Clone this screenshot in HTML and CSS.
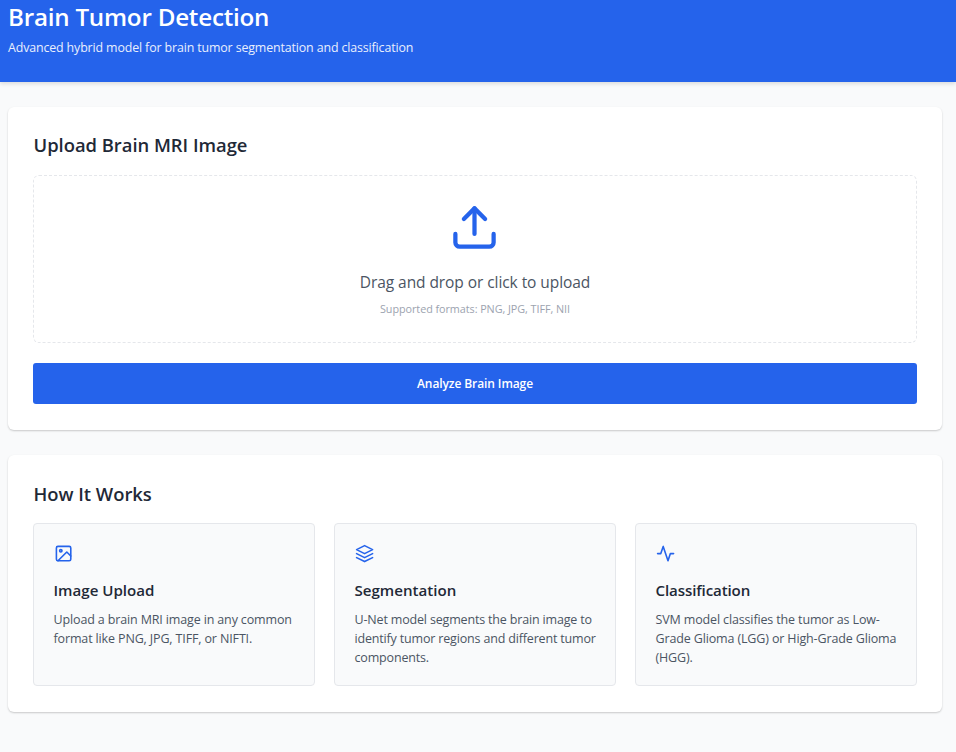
FILE: index.html
```
<!DOCTYPE html>
<html lang="en">
<head>
<meta charset="utf-8">
<title>Brain Tumor Detection</title>
<link rel="stylesheet" href="styles.css">
</head>
<body>
<header class="header">
  <h1 class="title">Brain Tumor Detection</h1>
  <p class="subtitle">Advanced hybrid model for brain tumor segmentation and classification</p>
</header>
<main class="main">
  <section class="card">
    <h2 class="heading upload-heading">Upload Brain MRI Image</h2>
    <div class="dropzone">
      <svg class="upload-icon" viewBox="0 0 24 24"><path d="M21 15v4a2 2 0 0 1-2 2H5a2 2 0 0 1-2-2v-4"/><path d="M17 8l-5-5-5 5"/><path d="M12 3v12"/></svg>
      <p class="drop-text">Drag and drop or click to upload</p>
      <p class="formats">Supported formats: PNG, JPG, TIFF, NII</p>
    </div>
    <button class="button" type="button">Analyze Brain Image</button>
  </section>
  <section class="card">
    <h2 class="heading works-heading">How It Works</h2>
    <div class="steps">
      <article class="step">
        <svg class="icon" viewBox="0 0 24 24"><rect x="3" y="3" width="18" height="18" rx="2"/><circle cx="8.5" cy="8.5" r="1.5"/><path d="M21 15l-5-5L5 21"/></svg>
        <h3 class="step-title">Image Upload</h3>
        <p class="step-text">Upload a brain MRI image in any common<br>format like PNG, JPG, TIFF, or NIFTI.</p>
      </article>
      <article class="step">
        <svg class="icon" viewBox="0 0 24 24"><path d="M12 2L2 7l10 5 10-5-10-5z"/><path d="M2 17l10 5 10-5"/><path d="M2 12l10 5 10-5"/></svg>
        <h3 class="step-title">Segmentation</h3>
        <p class="step-text tight">U-Net model segments the brain image to<br>identify tumor regions and different tumor<br>components.</p>
      </article>
      <article class="step">
        <svg class="icon" viewBox="0 0 24 24"><path d="M22 12h-4l-3 9L9 3l-3 9H2"/></svg>
        <h3 class="step-title narrow">Classification</h3>
        <p class="step-text">SVM model classifies the tumor as Low-<br>Grade Glioma (LGG) or High-Grade Glioma<br>(HGG).</p>
      </article>
    </div>
  </section>
</main>
</body>
</html>
```
FILE: styles.css
```
* { box-sizing: border-box; margin: 0; }
html { background: #f9fafb; }
body {
  min-height: 100vh;
  background: #f9fafb;
  color: #1f2937;
  font-family: "Open Sans", "Noto Sans", sans-serif;
  white-space: nowrap;
}
.header {
  height: 82px;
  padding: 0 8px;
  background: #2563eb;
  color: #fff;
  box-shadow: 0 2px 4px rgba(0, 0, 0, .12);
}
.title { font-size: 24.2px; line-height: 33px; font-weight: 600; letter-spacing: -.23px; }
.subtitle { margin-top: 5px; font-size: 12.4px; line-height: 19px; letter-spacing: -.13px; color: #e9effd; }
.main {
  display: flex;
  flex-direction: column;
  gap: 25px;
  width: 934px;
  padding-bottom: 39px;
  box-sizing: content-box;
  margin: 25px 0 0 8px;
}
.card {
  padding: 25px;
  border-radius: 6px;
  background: #fff;
  box-shadow: 0 1px 2px rgba(0, 0, 0, .2);
}
.card:first-child { height: 323px; }
.card:last-child { height: 257px; }
.heading { padding-left: .5px; font-size: 18.4px; line-height: 27px; font-weight: 600; letter-spacing: -.02px; }
.upload-heading { line-height: 26px; padding-bottom: 1px; }
.dropzone {
  display: flex;
  flex-direction: column;
  align-items: center;
  height: 168px;
  margin-top: 16px;
  padding-top: 26px;
  border: 1px dashed #e5e7eb;
  border-radius: 6px;
}
svg { display: block; fill: none; stroke: #2563eb; stroke-width: 2; stroke-linecap: round; stroke-linejoin: round; }
.upload-icon { width: 51px; height: 51px; margin-right: 1px; }
.drop-text { margin-top: 17px; font-size: 15.5px; line-height: 24px; letter-spacing: -.07px; color: #4b5563; }
.formats { margin-top: 6px; font-size: 10.8px; line-height: 17px; letter-spacing: -.05px; color: #9ca3af; }
.button {
  display: block;
  width: 100%;
  height: 41px;
  margin-top: 20px;
  padding: 0;
  border: 0;
  border-radius: 3px;
  background: #2563eb;
  color: #fff;
  font: 600 12px/41px "Open Sans", "Noto Sans", sans-serif;
  letter-spacing: -.1px;
}
.steps { display: grid; grid-template-columns: repeat(3, minmax(0, 1fr)); gap: 19px; margin-top: 16px; }
.step {
  height: 163px;
  padding: 20px 19.5px;
  border: 1px solid #e5e7eb;
  border-radius: 4px;
  background: #f9fafb;
}
.icon { width: 19.2px; height: 19.2px; margin-bottom: 15.8px; }
.step-title { font-size: 15.1px; line-height: 23px; font-weight: 600; }
.narrow { letter-spacing: -.12px; }
.step-text { margin-top: 8px; font-size: 12.5px; line-height: 19px; letter-spacing: -.14px; color: #4b5563; }
.tight { letter-spacing: -.17px; }
```
